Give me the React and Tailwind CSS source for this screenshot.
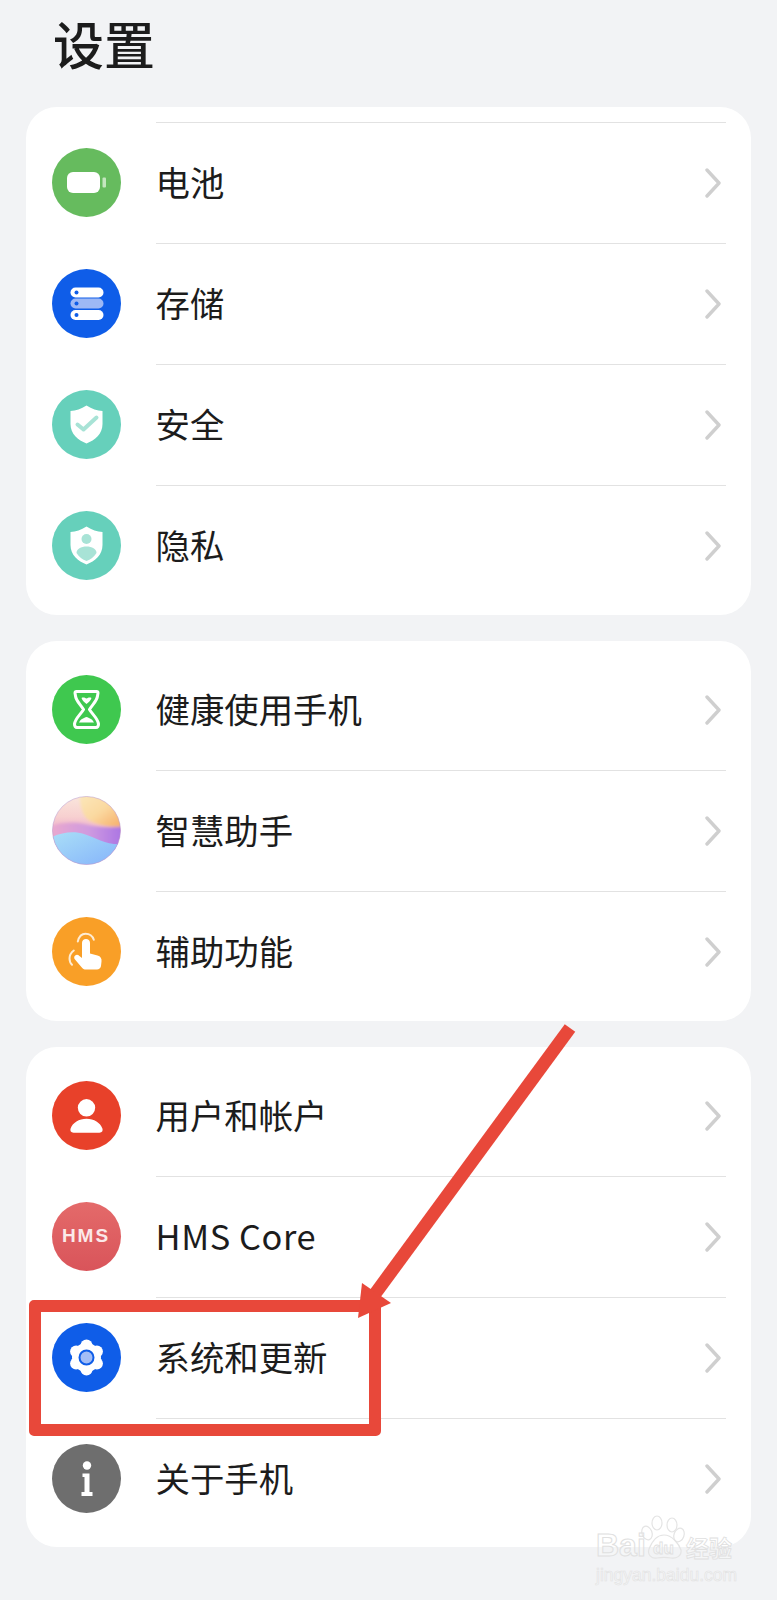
const cjk = "font-['Noto_Sans_CJK_SC','Noto_Sans',sans-serif]";

function Circle({ className, children }) {
  return (
    <svg width="69" height="69" viewBox="0 0 69 69" className="shrink-0">
      <circle cx="34.5" cy="34.5" r="34.5" className={className} />
      {children}
    </svg>
  );
}

function BatteryIcon() {
  return (
    <Circle className="fill-[#66bb5e]">
      <rect x="15" y="24" width="33" height="21" rx="6" fill="#fff" />
      <rect x="50.5" y="29.5" width="3.5" height="10" rx="1" fill="#c4e6bf" />
    </Circle>
  );
}

function StorageIcon() {
  return (
    <Circle className="fill-[#0f5de8]">
      <rect x="18.5" y="18.5" width="33" height="10" rx="5" fill="#fff" />
      <rect x="18.5" y="29.5" width="33" height="10" rx="5" fill="#9db8f5" />
      <rect x="18.5" y="41" width="33" height="10" rx="5" fill="#fff" />
      <circle cx="24.5" cy="23.5" r="2" fill="#0f5de8" />
      <circle cx="24.5" cy="34.5" r="2" fill="#0f5de8" />
      <circle cx="24.5" cy="46" r="2" fill="#0f5de8" />
    </Circle>
  );
}

const shield =
  "M34.5 15.5C40 19 45 20.5 50.5 21V34C50.5 44 43 50 34.5 53.5C26 50 18.5 44 18.5 34V21C24 20.5 29 19 34.5 15.5Z";

function SecurityIcon() {
  return (
    <Circle className="fill-[#66d0bb]">
      <path d={shield} fill="#fff" />
      <path d="M25.5 34.5L31.5 39.5L44.5 27.5" fill="none" stroke="#a8e3d6" strokeWidth="4" strokeLinecap="round" strokeLinejoin="round" />
    </Circle>
  );
}

function PrivacyIcon() {
  return (
    <Circle className="fill-[#66d0bb]">
      <path d={shield} fill="#fff" />
      <circle cx="34.5" cy="28" r="5" fill="#a8e3d6" />
      <path d="M24.5 42C24.5 38 29 35.5 34.5 35.5C40 35.5 44.5 38 44.5 42C42 46 38.5 48.5 34.5 50C30.5 48.5 27 46 24.5 42Z" fill="#a8e3d6" />
    </Circle>
  );
}

function HourglassIcon() {
  return (
    <Circle className="fill-[#3fc84f]">
      <path
        d="M24.5 16.5H44.5C45.5 16.5 46 17.2 46 18L45.5 21C45 26 40 30 37.5 34.5C40 39 46 43.5 46.5 49C46.6 51 45.5 52.5 44 52.5H25C23.5 52.5 22.4 51 22.5 49C23 43.5 29 39 31.5 34.5C29 30 24 26 23.5 21L23 18C23 17.2 23.5 16.5 24.5 16.5Z"
        fill="none"
        stroke="#fff"
        strokeWidth="3"
        strokeLinejoin="round"
      />
      <path d="M29.5 23C31.5 22 33 23 34.5 23.5C36 23 37.5 22 39.5 23C38.5 26 36.5 27.5 34.5 29C32.5 27.5 30.5 26 29.5 23Z" fill="#fff" />
      <path d="M27 47.5C29 43.5 32 43 34.5 42C37 43 40 43.5 42 47.5Z" fill="#fff" />
    </Circle>
  );
}

function AssistantIcon() {
  return (
    <svg width="69" height="69" viewBox="0 0 69 69" className="shrink-0">
      <defs>
        <clipPath id="orb">
          <circle cx="34.5" cy="34.5" r="34" />
        </clipPath>
        <filter id="soft" x="-20%" y="-20%" width="140%" height="140%">
          <feGaussianBlur stdDeviation="1.8" />
        </filter>
        <linearGradient id="orbBase" x1="0" y1="0" x2="0" y2="1">
          <stop offset="0" stopColor="#fae6dc" />
          <stop offset="0.3" stopColor="#f7d0d0" />
          <stop offset="0.55" stopColor="#eaa6c8" />
        </linearGradient>
        <linearGradient id="orbGold" x1="0" y1="0" x2="1" y2="1">
          <stop offset="0" stopColor="#fbe8bc" />
          <stop offset="0.5" stopColor="#fad9a0" />
          <stop offset="1" stopColor="#f6a862" />
        </linearGradient>
        <linearGradient id="orbViolet" x1="0" y1="0" x2="1" y2="0">
          <stop offset="0" stopColor="#e9a8ce" />
          <stop offset="0.5" stopColor="#cf9ae0" />
          <stop offset="1" stopColor="#a670e4" />
        </linearGradient>
        <linearGradient id="orbBlue" x1="0" y1="0" x2="1" y2="1">
          <stop offset="0" stopColor="#aadff7" />
          <stop offset="1" stopColor="#82b0fb" />
        </linearGradient>
      </defs>
      <g clipPath="url(#orb)">
        <rect width="69" height="69" fill="url(#orbBase)" />
        <g filter="url(#soft)">
          <path d="M0 30C10 26 22 26 32 28C46 32 58 32 74 30V56H0Z" fill="url(#orbViolet)" />
          <path d="M28 -4H74V30C62 32 50 30 40 26C32 23 27 12 28 -4Z" fill="url(#orbGold)" />
        </g>
        <path d="M-2 42C10 36 22 35 32 38C44 42 56 50 72 48V72H-2Z" fill="url(#orbBlue)" />
      </g>
      <circle cx="34.5" cy="34.5" r="34" fill="none" stroke="#b89ad0" strokeOpacity="0.5" strokeWidth="1" />
    </svg>
  );
}

function TouchIcon() {
  return (
    <Circle className="fill-[#f99f27]">
      <path
        d="M30 26C30 23.5 31.8 22 34 22C36.2 22 38 23.5 38 26V36.5L45.5 38.5C48.5 39.3 50 41.5 49.5 44.5L49 49C48.6 51.2 47 52.5 45 52.5H34C32 52.5 30.8 51.7 29.6 50.2L23 42.5C21.8 41 22 39.3 23.2 38.4C24.5 37.4 26.2 37.7 27.4 38.9L30 41Z"
        fill="#fff"
      />
      <path d="M25.8 24.5C27 19.5 30 16.8 33.5 16.8C37 16.8 40.5 19 41.8 22.8" fill="none" stroke="#fff" strokeOpacity="0.8" strokeWidth="2" strokeLinecap="round" />
      <path d="M20 47.8C17 45 15.8 38 21.8 33.5" fill="none" stroke="#fff" strokeOpacity="0.8" strokeWidth="2" strokeLinecap="round" />
    </Circle>
  );
}

function UserIcon() {
  return (
    <Circle className="fill-[#e8412a]">
      <circle cx="34.5" cy="26.8" r="8.7" fill="#fff" />
      <path d="M21.5 51.7C19 51.7 17.8 49.8 18.6 47.6C20.6 41.8 27 37.8 34.5 37.8C42 37.8 48.4 41.8 50.4 47.6C51.2 49.8 50 51.7 47.5 51.7Z" fill="#fff" />
    </Circle>
  );
}

function HmsIcon() {
  return (
    <div className="flex h-[69px] w-[69px] shrink-0 items-center justify-center rounded-full bg-gradient-to-b from-[#e46a6a] to-[#d9545a]">
      <span className="font-['Liberation_Sans',sans-serif] text-[19px] font-bold tracking-[2px] text-[#fbe9e9]">HMS</span>
    </div>
  );
}

function GearIcon() {
  return (
    <Circle className="fill-[#0f5de8]">
      <g fill="#fff">
        <circle cx="34.5" cy="34.5" r="14.5" />
        <circle cx="34.5" cy="22.5" r="6" />
        <circle cx="44.9" cy="28.5" r="6" />
        <circle cx="44.9" cy="40.5" r="6" />
        <circle cx="34.5" cy="46.5" r="6" />
        <circle cx="24.1" cy="40.5" r="6" />
        <circle cx="24.1" cy="28.5" r="6" />
      </g>
      <circle cx="34.5" cy="34.5" r="7" fill="#a3bdf6" stroke="#0f5de8" strokeWidth="2" />
    </Circle>
  );
}

function InfoIcon() {
  return (
    <Circle className="fill-[#6e6e6e]">
      <circle cx="35" cy="21.5" r="4.2" fill="#fff" />
      <path d="M30.5 29.5H37.5V48H40.5V52H29.5V48H32.5V33H30.5Z" fill="#fff" strokeLinejoin="round" />
    </Circle>
  );
}

function Row({ icon, label, first, latin }) {
  return (
    <div className="flex h-[121px] items-center pl-[25.5px]">
      {icon}
      <div className={`ml-[35px] mr-[25px] flex h-full flex-1 items-center justify-between pr-[5px] ${first ? "" : "border-t border-[#e2e2e2]"}`}>
        <span className={`${cjk} -mt-[3px] text-[34.4px] leading-none text-[#1c1c1c] ${latin ? "tracking-[0.6px]" : ""}`}>{label}</span>
        <svg width="16" height="30" viewBox="0 0 16 30">
          <path d="M2 2L14 15L2 28" fill="none" stroke="#cfcfcf" strokeWidth="3.4" strokeLinecap="round" strokeLinejoin="round" />
        </svg>
      </div>
    </div>
  );
}

function Card({ className, children }) {
  return <div className={`rounded-[31px] bg-white ${className}`}>{children}</div>;
}

function Watermark() {
  return (
    <>
      <svg className="absolute left-[635px] top-[1512px]" width="60" height="50" viewBox="0 0 60 50">
        <g fill="none" stroke="#e4e4e4" strokeWidth="1.2">
          <ellipse cx="22" cy="11" rx="5" ry="7" />
          <ellipse cx="37" cy="13" rx="5" ry="7" />
          <ellipse cx="12" cy="21" rx="5" ry="7" transform="rotate(-20 12 21)" />
          <ellipse cx="44" cy="23" rx="5" ry="7" transform="rotate(20 44 23)" />
          <path d="M29 23C37 23 44 32 46 38C47 44 41 47 36 46C31 45 27 45 22 46C17 47 12 43 14 37C16 32 21 23 29 23Z" />
        </g>
      </svg>
      <span className="absolute left-[596px] top-[1527px] font-['Liberation_Sans',sans-serif] text-[32px] font-bold leading-[36px] text-white/30 [-webkit-text-stroke:1px_#e0e0e0]">Bai</span>
      <span className="absolute left-[653px] top-[1540px] font-['Liberation_Sans',sans-serif] text-[17px] font-bold leading-[18px] text-white/30 [-webkit-text-stroke:0.8px_#e0e0e0]">du</span>
      <span className={`absolute left-[686px] top-[1533px] ${cjk} text-[23px] font-bold leading-[28px] text-white/30 [-webkit-text-stroke:0.8px_#e0e0e0]`}>经验</span>
      <span className="absolute left-[596px] top-[1564px] font-['Liberation_Sans',sans-serif] text-[17.5px] leading-[22px] text-white/30 [-webkit-text-stroke:0.6px_#e2e2e2]">jingyan.baidu.com</span>
    </>
  );
}

export default function App() {
  return (
    <div className="relative h-[1600px] w-[777px] overflow-hidden bg-[#f2f3f5]">
      <div className="flex h-[107px] items-start pl-[53px] pt-[10px]">
        <h1 className={`${cjk} text-[51px] font-medium leading-[66px] text-[#1c1c1c]`}>设置</h1>
      </div>

      <div className="ml-[26px] flex w-[725px] flex-col gap-[26px]">
        <Card className="pb-[9px] pt-[15px]">
          <Row icon={<BatteryIcon />} label="电池" />
          <Row icon={<StorageIcon />} label="存储" />
          <Row icon={<SecurityIcon />} label="安全" />
          <Row icon={<PrivacyIcon />} label="隐私" />
        </Card>
        <Card className="pb-[9px] pt-[8px]">
          <Row first icon={<HourglassIcon />} label="健康使用手机" />
          <Row icon={<AssistantIcon />} label="智慧助手" />
          <Row icon={<TouchIcon />} label="辅助功能" />
        </Card>
        <Card className="pb-[8px] pt-[8px]">
          <Row first icon={<UserIcon />} label="用户和帐户" />
          <Row latin icon={<HmsIcon />} label="HMS Core" />
          <Row icon={<GearIcon />} label="系统和更新" />
          <Row icon={<InfoIcon />} label="关于手机" />
        </Card>
      </div>

      {/* red annotation over the list */}
      <div className="absolute left-[29px] top-[1300px] h-[136px] w-[352px] rounded-[5px] border-[12.5px] border-[#e8483a]" />
      <svg className="absolute left-0 top-0" width="777" height="1600" viewBox="0 0 777 1600">
        <path d="M570 1028L372 1298" stroke="#e8483a" strokeWidth="13" fill="none" />
        <path d="M362 1283L391 1303L358 1318Z" fill="#e8483a" />
      </svg>

      <Watermark />
    </div>
  );
}
